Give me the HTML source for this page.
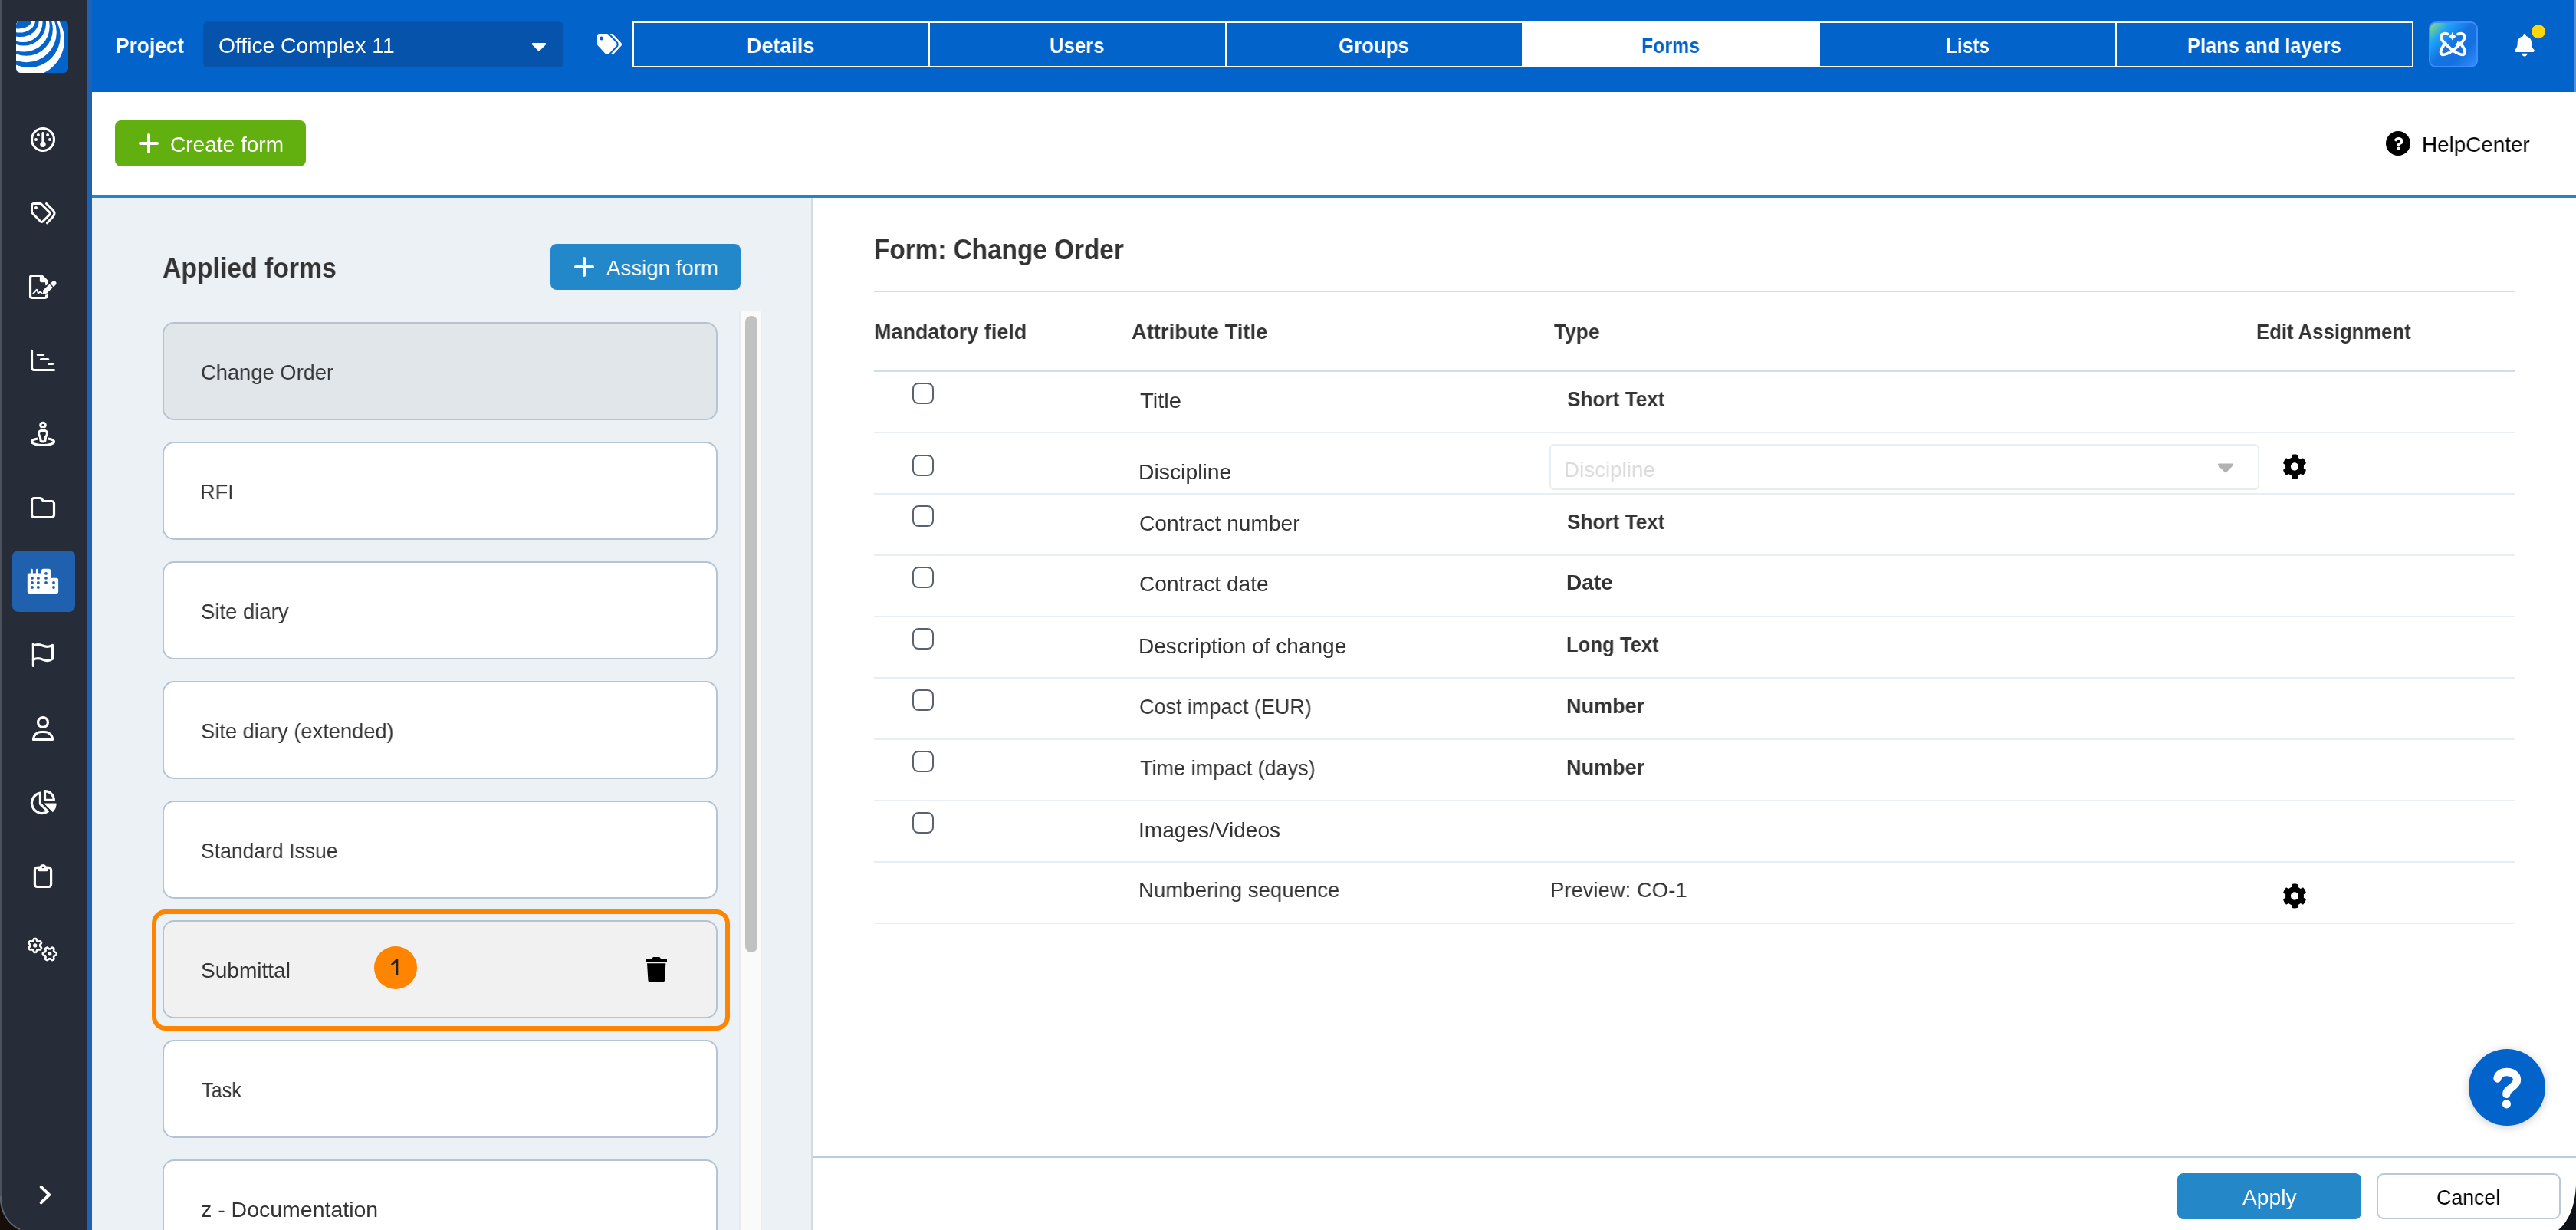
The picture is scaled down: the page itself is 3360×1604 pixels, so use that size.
<!DOCTYPE html>
<html><head><meta charset="utf-8"><title>Forms</title>
<style>
html,body{margin:0;padding:0}
body{width:3360px;height:1604px;position:relative;overflow:hidden;background:#fff;font-family:"Liberation Sans",sans-serif}
div,span,svg{position:absolute;box-sizing:border-box}
.t{white-space:nowrap;line-height:1;transform-origin:0 0;will-change:transform}
.side{left:0;top:0;width:114px;height:1604px;background:#262c38}
.sidestrip{left:114px;top:0;width:6px;height:1604px;background:#1f62b3}
.header{left:120px;top:0;width:3240px;height:120px;background:#0263cb}
.blueline{left:120px;top:254px;width:3240px;height:4px;background:#2285c6}
.leftpanel{left:120px;top:258px;width:940px;height:1346px;background:#ecf1f6;border-right:2px solid #cfdce6}
.card{left:212px;width:724px;height:128px;border:2px solid #b6c3d2;border-radius:15px;background:#fff}
.hr{background:#e8eef3;height:2px;left:1140px;width:2140px}
.cb{left:1190px;width:28px;height:28px;border:2px solid #58636f;border-radius:8px;background:#fff}
.tab{top:28px;height:60px;border:2px solid #fff}

</style></head>
<body>
<!-- base layout -->
<div class="header"></div>
<div class="side"></div>
<div class="sidestrip"></div>
<div class="blueline"></div>
<div class="leftpanel"></div>

<!-- header: project select -->
<div style="left:265px;top:28px;width:470px;height:60px;background:#0553aa;border-radius:6px"></div>
<svg style="left:693px;top:44px" width="20" height="32" viewBox="0 0 320 512"><path fill="#fff" d="M31.3 192h257.3c17.8 0 26.7 21.5 14.1 34.1L174.1 354.8c-7.8 7.8-20.5 7.8-28.3 0L17.2 226.1C4.6 213.5 13.5 192 31.3 192z"/></svg>
<!-- header tags icon -->
<svg style="left:779px;top:44px" width="32" height="27.4" viewBox="0 0 640 512" preserveAspectRatio="none"><path fill="#fff" d="M497.941 225.941L286.059 14.059A48 48 0 0 0 252.118 0H48C21.49 0 0 21.49 0 48v204.118a48 48 0 0 0 14.059 33.941l211.882 211.882c18.744 18.745 49.136 18.746 67.882 0l204.118-204.118c18.745-18.745 18.745-49.137 0-67.882zM112 160c-26.51 0-48-21.49-48-48s21.49-48 48-48 48 21.49 48 48-21.49 48-48 48zm513.941 133.823L421.823 497.941c-18.745 18.745-49.137 18.745-67.882 0l-.36-.36L527.64 323.522c16.999-16.999 26.36-39.6 26.36-63.64s-9.362-46.641-26.36-63.64L331.397 0h48.721a48 48 0 0 1 33.941 14.059l211.882 211.882c18.745 18.745 18.745 49.137 0 67.882z"/></svg>
<!-- tabs -->
<div class="tab" style="left:825px;width:2323px"></div>
<div style="left:1211px;top:28px;width:2px;height:60px;background:#fff"></div>
<div style="left:1598px;top:28px;width:2px;height:60px;background:#fff"></div>
<div style="left:1985px;top:28px;width:389px;height:60px;background:#fff"></div>
<div style="left:2759px;top:28px;width:2px;height:60px;background:#fff"></div>
<!-- AI button -->
<div style="left:3168px;top:28px;width:64px;height:60px;border-radius:9px;border:2px solid #3f8cff;background:linear-gradient(135deg,#8fe06c 0%,#1da2fb 24%,#1473e1 48%,#1470e0 70%,#2c90fb 100%)"></div>
<svg style="left:3180px;top:40px" width="40" height="36" viewBox="0 0 40 36" fill="none" stroke="#fff" stroke-width="3.8" stroke-linecap="round" stroke-linejoin="round">
 <path d="M12.70 4.40C11.88 4.30 9.18 3.55 7.80 3.80C6.42 4.05 5.02 4.93 4.40 5.90C3.78 6.87 3.63 8.15 4.10 9.60C4.57 11.05 5.87 12.95 7.20 14.60C8.53 16.25 10.05 17.60 12.10 19.50C14.15 21.40 17.03 24.25 19.50 26.00C21.97 27.75 24.73 29.12 26.90 30.00C29.07 30.88 31.15 31.50 32.50 31.30C33.85 31.10 34.68 29.93 35.00 28.80C35.32 27.67 34.92 25.95 34.40 24.50C33.88 23.05 32.83 21.45 31.90 20.10C30.97 18.75 29.32 17.02 28.80 16.40"/>
 <path d="M26.00 4.40C26.82 4.30 29.52 3.55 30.90 3.80C32.28 4.05 33.68 4.93 34.30 5.90C34.92 6.87 35.07 8.15 34.60 9.60C34.13 11.05 32.83 12.95 31.50 14.60C30.17 16.25 28.65 17.60 26.60 19.50C24.55 21.40 21.67 24.25 19.20 26.00C16.73 27.75 13.97 29.12 11.80 30.00C9.63 30.88 7.55 31.50 6.20 31.30C4.85 31.10 4.02 29.93 3.70 28.80C3.38 27.67 3.78 25.95 4.30 24.50C4.82 23.05 5.87 21.45 6.80 20.10C7.73 18.75 9.38 17.02 9.90 16.40"/>
 <path d="M18.90 2.90L20.38 6.02L23.50 7.50L20.38 8.98L18.90 12.10L17.42 8.98L14.30 7.50L17.42 6.02Z" fill="#fff" stroke-width="1"/>
 <path d="M26.00 14.20L27.13 16.57L29.50 17.70L27.13 18.83L26.00 21.20L24.87 18.83L22.50 17.70L24.87 16.57Z" fill="#fff" stroke-width="1"/>
</svg>
<!-- bell -->
<svg style="left:3280px;top:44.2px" width="25.8" height="29.4" viewBox="0 0 448 512" preserveAspectRatio="none"><path fill="#fff" d="M224 512c35.32 0 63.97-28.65 63.97-64H160.030c0 35.350 28.650 64 63.970 64zm215.390-149.710c-19.320-20.760-55.470-51.990-55.470-154.290 0-77.700-54.480-139.900-127.940-155.160V32c0-17.670-14.320-32-31.980-32s-31.980 14.330-31.980 32v20.840C118.560 68.100 64.080 130.300 64.080 208c0 102.300-36.150 133.530-55.470 154.290-6 6.450-8.660 14.160-8.610 21.710.110 16.400 12.980 32 32.100 32h383.800c19.120 0 32-15.600 32.100-32 .05-7.550-2.610-15.270-8.610-21.710z"/></svg>
<div style="left:3302px;top:32px;width:18px;height:18px;border-radius:9px;background:#ffd60a"></div>
<div style="left:3358px;top:0;width:2px;height:120px;background:rgba(255,255,255,.3)"></div>

<!-- toolbar -->
<div style="left:150px;top:157px;width:249px;height:60px;background:#62b00f;border-radius:8px"></div>
<div style="left:181px;top:185px;width:26px;height:4px;border-radius:2px;background:#fff"></div>
<div style="left:192px;top:174px;width:4px;height:26px;border-radius:2px;background:#fff"></div>
<div style="left:3112px;top:171px;width:32px;height:32px;border-radius:16px;background:#000"></div>
<svg style="left:3121.600px;top:178.500px" width="13" height="17.300" viewBox="0 0 384 512" preserveAspectRatio="none"><path fill="#fff" d="M202.021 0C122.202 0 70.503 32.703 29.914 91.026c-7.363 10.580-5.093 25.086 5.178 32.874l43.138 32.709c10.373 7.865 25.132 6.026 33.253-4.148 25.049-31.381 43.630-49.449 82.757-49.449 30.764 0 68.816 19.799 68.816 49.631 0 22.552-18.617 34.134-48.993 51.164-35.423 19.860-82.299 44.576-82.299 106.405V320c0 13.255 10.745 24 24 24h72.471c13.255 0 24-10.745 24-24v-5.773c0-42.860 125.268-44.645 125.268-160.627C377.504 66.256 286.902 0 202.021 0zM192 373.459c-38.196 0-69.271 31.075-69.271 69.271 0 38.195 31.075 69.270 69.271 69.270s69.271-31.075 69.271-69.271-31.075-69.270-69.271-69.270z"/></svg>

<!-- left panel -->
<div style="left:718px;top:318px;width:248px;height:60px;background:#2388c9;border-radius:8px"></div>
<div style="left:749px;top:346px;width:26px;height:4px;border-radius:2px;background:#fff"></div>
<div style="left:760px;top:335px;width:4px;height:26px;border-radius:2px;background:#fff"></div>

<div class="card" style="top:420px;background:#e1e6eb"></div>
<div class="card" style="top:576px"></div>
<div class="card" style="top:732px"></div>
<div class="card" style="top:888px"></div>
<div class="card" style="top:1044px"></div>
<div style="left:198px;top:1186px;width:754px;height:158px;border:6px solid #ff8500;border-radius:18px"></div>
<div class="card" style="top:1200px;background:#f1f1f1"></div>
<div class="card" style="top:1356px"></div>
<div class="card" style="top:1512px"></div>
<div style="left:488px;top:1234px;width:56px;height:56px;border-radius:28px;background:#ff8500"></div>
<svg style="left:506px;top:1248px" width="18" height="27" viewBox="0 0 18 27"><path d="M10.300 3.100H13.300V23.600H10.300V7.200L5.400 11.300L3.900 9.200Z" fill="#222"/></svg>
<svg style="left:841.8px;top:1247.5px" width="28.4" height="32.8" viewBox="0 0 448 512" preserveAspectRatio="none"><path fill="#000" d="M432 32H312l-9.400-18.700A24 24 0 0 0 281.100 0H166.800a23.720 23.720 0 0 0-21.400 13.300L136 32H16A16 16 0 0 0 0 48v32a16 16 0 0 0 16 16h416a16 16 0 0 0 16-16V48a16 16 0 0 0-16-16zM53.200 467a48 48 0 0 0 47.900 45h245.800a48 48 0 0 0 47.900-45L416 128H32z"/></svg>
<!-- scrollbar -->
<div style="left:964px;top:406px;width:30px;height:1198px;background:#fafafa;border-left:2px solid #eaeaea;border-right:2px solid #eeeeee"></div>
<div style="left:972px;top:412px;width:16px;height:830px;border-radius:8px;background:#c1c1c1"></div>

<!-- right panel -->
<div style="left:1140px;top:379px;width:2140px;height:2px;background:#d3dde7"></div>
<div style="left:1140px;top:483px;width:2140px;height:2px;background:#d1dde8"></div>
<div class="hr" style="top:563px"></div>
<div class="hr" style="top:643px"></div>
<div class="hr" style="top:723px"></div>
<div class="hr" style="top:803px"></div>
<div class="hr" style="top:883px"></div>
<div class="hr" style="top:963px"></div>
<div class="hr" style="top:1043px"></div>
<div class="hr" style="top:1123px"></div>
<div class="hr" style="top:1203px"></div>
<div class="cb" style="top:499px"></div>
<div class="cb" style="top:593px"></div>
<div class="cb" style="top:659px"></div>
<div class="cb" style="top:739px"></div>
<div class="cb" style="top:819px"></div>
<div class="cb" style="top:899px"></div>
<div class="cb" style="top:979px"></div>
<div class="cb" style="top:1059px"></div>
<!-- discipline select -->
<div style="left:2021px;top:579px;width:926px;height:60px;border:2px solid #e8edf3;border-radius:6px;background:#fff"></div>
<svg style="left:2892px;top:590.5px" width="22" height="36" viewBox="0 0 320 512" preserveAspectRatio="none"><path fill="#b2b2b2" d="M31.3 192h257.3c17.8 0 26.7 21.5 14.1 34.1L174.1 354.8c-7.8 7.8-20.5 7.8-28.3 0L17.2 226.1C4.6 213.5 13.5 192 31.3 192z"/></svg>
<!-- gears -->
<svg style="left:2977px;top:592.3px" width="32" height="33" viewBox="0 0 512 512" preserveAspectRatio="none"><path id="cog" fill="#000" d="M487.4 315.7l-42.6-24.6c4.3-23.2 4.3-47 0-70.2l42.6-24.6c4.9-2.8 7.1-8.6 5.5-14-11.100-35.600-30-67.800-54.700-94.600-3.800-4.100-10-5.100-14.800-2.300L380.800 110c-17.900-15.400-38.500-27.300-60.800-35.100V25.800c0-5.600-3.900-10.500-9.400-11.700-36.700-8.200-74.300-7.800-109.200 0-5.500 1.200-9.400 6.100-9.400 11.700V75c-22.200 7.900-42.800 19.800-60.800 35.100L88.700 85.500c-4.900-2.800-11-1.900-14.800 2.300-24.700 26.700-43.600 58.900-54.700 94.600-1.700 5.400.6 11.200 5.500 14L67.300 221c-4.300 23.200-4.300 47 0 70.200l-42.600 24.600c-4.900 2.800-7.100 8.600-5.500 14 11.100 35.600 30 67.800 54.700 94.600 3.800 4.100 10 5.100 14.800 2.300l42.600-24.600c17.900 15.400 38.500 27.300 60.800 35.100v49.200c0 5.600 3.900 10.500 9.400 11.700 36.700 8.200 74.300 7.800 109.200 0 5.500-1.200 9.400-6.100 9.400-11.700v-49.200c22.200-7.900 42.800-19.800 60.800-35.100l42.600 24.600c4.900 2.800 11 1.900 14.800-2.300 24.700-26.700 43.600-58.900 54.700-94.600 1.500-5.500-.7-11.300-5.600-14.100zM256 336c-44.100 0-80-35.900-80-80s35.900-80 80-80 80 35.900 80 80-35.900 80-80 80z"/></svg>
<svg style="left:2977px;top:1152.3px" width="32" height="33" viewBox="0 0 512 512" preserveAspectRatio="none"><use href="#cog"/></svg>

<!-- footer -->
<div style="left:1060px;top:1508px;width:2300px;height:2px;background:#bccada"></div>
<div style="left:2840px;top:1530px;width:240px;height:60px;background:#2387c8;border-radius:8px"></div>
<div style="left:3100px;top:1530px;width:240px;height:60px;background:#fff;border:2px solid #bac8d7;border-radius:9px"></div>
<!-- FAB -->
<div style="left:3220px;top:1368px;width:100px;height:100px;border-radius:50px;background:#0263cb;box-shadow:0 2px 12px rgba(0,0,0,.2)"></div>
<svg style="left:3245px;top:1385px" width="50" height="66" viewBox="0 0 50 66" fill="none" stroke="#fff" stroke-width="10.300" stroke-linecap="round" stroke-linejoin="round"><path d="M12.500 21.500C13 16 18 13 25 13C32.500 13 38 17 38 23C38 28 34 31 30 34C26.500 36.800 24.300 38.500 24.300 41.800"/><circle cx="24.400" cy="54.800" r="5.600" fill="#fff" stroke="none"/></svg>

<!-- left edge strip -->
<div style="left:0;top:0;width:2px;height:1604px;background:#4c515b"></div>
<!-- logo -->
<svg style="left:21px;top:27px" width="68" height="68" viewBox="0 0 68 68">
 <defs><clipPath id="lc"><rect x="0" y="0" width="68" height="68" rx="6"/></clipPath></defs>
 <g clip-path="url(#lc)">
  <rect width="68" height="68" fill="#0263cb"/>
  <circle cx="15" cy="25" r="48" fill="#fff"/>
  <circle cx="16.700" cy="20" r="41.100" fill="#0263cb"/>
  <circle cx="13.600" cy="15" r="39.200" fill="#fff"/>
  <circle cx="13.200" cy="11.200" r="34.660" fill="#0263cb"/>
  <circle cx="10.500" cy="7.460" r="33.150" fill="#fff"/>
  <circle cx="9.800" cy="3.400" r="29.200" fill="#0263cb"/>
  <circle cx="9" cy="2.600" r="25.500" fill="#fff"/>
  <ellipse cx="5.700" cy="0" rx="24.100" ry="21.100" fill="#0263cb"/>
  <ellipse cx="4.080" cy="0" rx="20.900" ry="15.600" fill="#fff"/>
  <ellipse cx="3.300" cy="0" rx="16.900" ry="10.400" fill="#0263cb"/>
 </g>
</svg>
<!-- active item -->
<div style="left:16px;top:718px;width:82px;height:80px;border-radius:8px;background:#1f61af"></div>
<!-- 1 gauge -->
<svg style="left:40px;top:166px" width="32" height="32" viewBox="0 0 32 32" fill="none" stroke="#fff" stroke-width="3.100" stroke-linecap="round">
 <circle cx="16" cy="16" r="14.500"/>
 <path d="M16 7.700V21" stroke-width="3.300"/>
 <circle cx="16" cy="22.200" r="3.700" fill="#fff" stroke="none"/>
 <g fill="#fff" stroke="none"><circle cx="7" cy="16" r="2"/><circle cx="9.900" cy="9.900" r="2"/><circle cx="22.100" cy="9.900" r="2"/><circle cx="25" cy="16" r="2"/></g>
</svg>
<!-- 2 tags -->
<svg style="left:40px;top:264px" width="34" height="29" viewBox="0 0 34 29" fill="none" stroke="#fff" stroke-width="3" stroke-linecap="round" stroke-linejoin="round">
 <path d="M4 1.500H13.200L24.600 12.900a2.200 2.200 0 0 1 0 3.100L15.900 24.700a2.200 2.200 0 0 1-3.100 0L1.500 13.300V4A2.500 2.500 0 0 1 4 1.500Z"/>
 <circle cx="7" cy="7" r="2" fill="#fff" stroke="none"/>
 <path d="M20.500 1.500L28.800 9.800Q33.200 14.300 28.800 19L21.500 26.800"/>
</svg>
<!-- 3 file signature -->
<svg style="left:37px;top:358px" width="39" height="33" viewBox="0 0 39 33" fill="none" stroke="#fff" stroke-width="3.200" stroke-linecap="round" stroke-linejoin="round">
 <path d="M23.700 8.200V13M23.700 26.800V28a2.500 2.500 0 0 1-2.500 2.500H5.050a2.500 2.500 0 0 1-2.500-2.500V4a2.500 2.500 0 0 1 2.500-2.500H17L23.700 8.200"/>
 <path d="M14.850 1.500H17L23.700 8.200V10.200H17.350a2.500 2.500 0 0 1-2.500-2.500Z" fill="#fff" stroke="none"/>
 <path d="M6.300 25L10.950 19.700L12.900 24.500L15.300 22.600L18.300 24.500H23.500" stroke-width="1.900"/>
 <path d="M22.300 21.700L33.300 11.400" stroke="#262c38" stroke-width="9.400"/>
 <path d="M19.200 25L20.500 19.500L24.800 23.600Z" fill="#fff" stroke-width="1"/>
 <path d="M22.600 21.500L33.300 11.400" stroke-width="6.200"/>
 <path d="M27.300 11.300L33.400 17.700" stroke="#262c38" stroke-width="1.400" stroke-linecap="butt"/>
</svg>
<!-- 4 gantt -->
<svg style="left:40px;top:455px" width="33" height="30" viewBox="0 0 33 30" fill="none" stroke="#fff" stroke-width="3.200" stroke-linecap="round" stroke-linejoin="round">
 <path d="M1.500 2.400V24.500a3 3 0 0 0 3 3H30.500"/>
 <path d="M9.200 7.500H16.700M13.400 13.500H22.800M23.400 19.500H28.600" stroke-width="3"/>
</svg>
<!-- 5 street view -->
<svg style="left:40px;top:549px" width="33" height="34" viewBox="0 0 33 34" fill="none" stroke="#fff" stroke-width="3.200" stroke-linecap="round" stroke-linejoin="round">
 <circle cx="16" cy="5.440" r="3.200"/>
 <ellipse cx="16" cy="27" rx="14.500" ry="4.500"/>
 <defs><path id="svb" d="M16 12.300C19.500 12.300 21.500 14 21.500 16.500C21.500 18.500 20.300 19.800 19.600 20.600L19 25A3 1.800 0 0 1 13 25L12.400 20.600C11.700 19.800 10.500 18.500 10.500 16.500C10.500 14 12.500 12.300 16 12.300Z"/></defs>
 <use href="#svb" stroke="#262c38" stroke-width="6.400" fill="#262c38"/>
 <use href="#svb" stroke="#fff" stroke-width="3.200" fill="none"/>
</svg>
<!-- 6 folder -->
<svg style="left:40px;top:647px" width="33" height="30" viewBox="0 0 33 30" fill="none" stroke="#fff" stroke-width="3.200" stroke-linecap="round" stroke-linejoin="round">
 <path d="M4.500 2.500H13L17 6.500H27.500a3 3 0 0 1 3 3V24.500a3 3 0 0 1-3 3H4.500a3 3 0 0 1-3-3V5.500a3 3 0 0 1 3-3Z"/>
</svg>
<!-- 7 city (solid) -->
<svg style="left:35px;top:741px" width="42" height="34" viewBox="0 0 42 34">
 <path fill="#fff" d="M3.300 6.600H4.900V2.200a1.450 1.450 0 0 1 2.900 0V6.600H11.900V2.200a1.450 1.450 0 0 1 2.900 0V6.600H19V3.200a2.500 2.500 0 0 1 2.500-2.500H28.600a2.500 2.500 0 0 1 2.500 2.500V12.800H38.600a2.500 2.500 0 0 1 2.500 2.500V30.500a2.500 2.500 0 0 1-2.500 2.500H3.300a2.500 2.500 0 0 1-2.500-2.500V9.100a2.500 2.500 0 0 1 2.500-2.500Z"/>
 <g fill="#1f61af"><circle cx="7" cy="12.900" r="1.950"/><circle cx="14.900" cy="12.900" r="1.950"/><circle cx="7" cy="18.900" r="1.950"/><circle cx="14.900" cy="18.900" r="1.950"/><circle cx="7" cy="25" r="1.950"/><circle cx="14.900" cy="25" r="1.950"/><circle cx="25" cy="6.900" r="1.950"/><circle cx="25" cy="12.900" r="1.950"/><circle cx="25" cy="18.900" r="1.950"/><circle cx="35" cy="18.900" r="1.950"/><circle cx="35" cy="25" r="1.950"/></g>
</svg>
<!-- 8 flag -->
<svg style="left:41px;top:837px" width="31" height="34" viewBox="0 0 31 34" fill="none" stroke="#fff" stroke-width="3.200" stroke-linecap="round" stroke-linejoin="round">
 <path d="M2.400 2.500V31.500"/>
 <path d="M2.400 5.200C6 3.200 10 3.200 14 4.800S23 7.200 27.500 4.400V22.200C23 25.400 19 25 15 23.200S6.500 21 2.400 23.400"/>
</svg>
<!-- 9 user -->
<svg style="left:42px;top:933px" width="29" height="34" viewBox="0 0 29 34" fill="none" stroke="#fff" stroke-width="3.200" stroke-linecap="round" stroke-linejoin="round">
 <circle cx="14" cy="8.950" r="6.450"/>
 <path d="M1.500 31.500C1.500 26 6 21.500 12 21.500H16C22 21.500 26.500 26 26.500 31.500Z"/>
</svg>
<!-- 10 pie -->
<svg style="left:39px;top:1029px" width="37" height="34" viewBox="0 0 37 34" fill="none" stroke="#fff" stroke-width="3.200" stroke-linejoin="round">
 <path d="M13.440 5.150V19.440L23.200 29.200A13.270 13.270 0 1 1 13.440 5.150Z"/>
 <path d="M19.540 2.600V14.410H31.340A11.800 11.800 0 0 0 19.540 2.600Z"/>
 <path d="M18.950 18.950H34.350A15.400 15.400 0 0 1 29.850 29.850Z" fill="#fff" stroke-width=".8"/>
</svg>
<!-- 11 clipboard -->
<svg style="left:43px;top:1124px" width="26" height="35" viewBox="0 0 26 35" fill="none" stroke="#fff" stroke-width="3.200" stroke-linejoin="round">
 <rect x="2.400" y="7.400" width="21.200" height="25.100" rx="3"/>
 <path d="M5.900 5.800H8.500A5 5 0 0 1 17.500 5.800H20.100V10a2.200 2.200 0 0 1-2.200 2.200H8.100a2.200 2.200 0 0 1-2.200-2.200Z" fill="#fff" stroke="none"/>
 <circle cx="13" cy="6.930" r="1.250" fill="#262c38" stroke="none"/>
</svg>
<svg style="left:35px;top:1222px" width="42" height="33" viewBox="0 0 42 33" fill="none" stroke="#fff" stroke-width="2.600" stroke-linejoin="round">
 <path d="M17.31 10.90L17.30 11.33L17.25 11.75L17.60 12.26L18.25 12.91L18.84 13.64L19.03 14.33L18.79 14.86L18.51 15.38L18.20 15.87L17.86 16.35L17.17 16.52L16.24 16.38L15.36 16.14L14.75 16.10L14.40 16.35L14.04 16.57L13.66 16.77L13.27 16.95L13.00 17.50L12.77 18.39L12.42 19.27L11.93 19.77L11.35 19.83L10.76 19.85L10.17 19.83L9.59 19.77L9.10 19.27L8.75 18.39L8.52 17.50L8.25 16.95L7.86 16.77L7.49 16.57L7.12 16.35L6.77 16.10L6.16 16.14L5.28 16.38L4.35 16.52L3.66 16.35L3.32 15.87L3.01 15.38L2.73 14.86L2.49 14.33L2.68 13.64L3.27 12.91L3.92 12.26L4.27 11.75L4.22 11.33L4.21 10.90L4.22 10.47L4.27 10.05L3.92 9.54L3.27 8.89L2.68 8.16L2.49 7.47L2.73 6.94L3.01 6.43L3.32 5.93L3.66 5.45L4.35 5.28L5.28 5.42L6.16 5.66L6.77 5.70L7.12 5.45L7.48 5.23L7.86 5.03L8.25 4.85L8.52 4.30L8.75 3.41L9.10 2.53L9.59 2.03L10.17 1.97L10.76 1.95L11.35 1.97L11.93 2.03L12.42 2.53L12.77 3.41L13.00 4.30L13.27 4.85L13.66 5.03L14.04 5.23L14.40 5.45L14.75 5.70L15.36 5.66L16.24 5.42L17.17 5.28L17.86 5.45L18.20 5.93L18.51 6.42L18.79 6.94L19.03 7.47L18.84 8.16L18.25 8.89L17.60 9.54L17.25 10.05L17.30 10.47Z"/><circle cx="10.760" cy="10.900" r="2.600" fill="#fff" stroke="none"/>
 <path d="M38.75 21.85L38.73 22.44L38.67 23.02L38.17 23.51L37.29 23.86L36.40 24.09L35.85 24.36L35.67 24.75L35.47 25.12L35.25 25.49L35.00 25.84L35.04 26.45L35.28 27.33L35.42 28.26L35.25 28.95L34.77 29.29L34.27 29.60L33.76 29.88L33.23 30.12L32.54 29.93L31.81 29.34L31.16 28.69L30.65 28.34L30.23 28.39L29.80 28.40L29.37 28.39L28.95 28.34L28.44 28.69L27.79 29.34L27.06 29.93L26.37 30.12L25.84 29.88L25.33 29.60L24.83 29.29L24.35 28.95L24.18 28.26L24.32 27.33L24.56 26.45L24.60 25.84L24.35 25.49L24.13 25.12L23.93 24.75L23.75 24.36L23.20 24.09L22.31 23.86L21.43 23.51L20.93 23.02L20.87 22.44L20.85 21.85L20.87 21.26L20.93 20.68L21.43 20.19L22.31 19.84L23.20 19.61L23.75 19.34L23.93 18.95L24.13 18.58L24.35 18.21L24.60 17.86L24.56 17.25L24.32 16.37L24.18 15.44L24.35 14.75L24.83 14.41L25.32 14.10L25.84 13.82L26.37 13.58L27.06 13.77L27.79 14.36L28.44 15.01L28.95 15.36L29.37 15.31L29.80 15.30L30.23 15.31L30.65 15.36L31.16 15.01L31.81 14.36L32.54 13.77L33.23 13.58L33.76 13.82L34.27 14.10L34.77 14.41L35.25 14.75L35.42 15.44L35.28 16.37L35.04 17.25L35.00 17.86L35.25 18.21L35.47 18.57L35.67 18.95L35.85 19.34L36.40 19.61L37.29 19.84L38.17 20.19L38.67 20.68L38.73 21.26Z"/><circle cx="29.800" cy="21.850" r="2.600" fill="#fff" stroke="none"/>
</svg>
<!-- 13 chevron -->
<svg style="left:50px;top:1544px" width="20" height="29" viewBox="0 0 20 29" fill="none" stroke="#fff" stroke-width="3.900" stroke-linecap="round" stroke-linejoin="round"><path d="M3.650 3.850L14.250 14.100L3.650 24.350"/></svg>

<span class="t" style="left:150.9px;top:45.6px;font-size:28px;font-weight:bold;color:#fff;transform:scaleX(0.9402)">Project</span>
<span class="t" style="left:284.5px;top:45.6px;font-size:28px;font-weight:normal;color:#fff;transform:scaleX(1.0081)">Office Complex 11</span>
<span class="t" style="left:974.2px;top:45.9px;font-size:28px;font-weight:bold;color:#fff;transform:scaleX(0.9618)">Details</span>
<span class="t" style="left:1368.8px;top:45.9px;font-size:28px;font-weight:bold;color:#fff;transform:scaleX(0.9192)">Users</span>
<span class="t" style="left:1745.9px;top:45.9px;font-size:28px;font-weight:bold;color:#fff;transform:scaleX(0.9216)">Groups</span>
<span class="t" style="left:2141.4px;top:45.9px;font-size:28px;font-weight:bold;color:#0263cb;transform:scaleX(0.8893)">Forms</span>
<span class="t" style="left:2537.7px;top:45.9px;font-size:28px;font-weight:bold;color:#fff;transform:scaleX(0.8733)">Lists</span>
<span class="t" style="left:2852.6px;top:45.9px;font-size:28px;font-weight:bold;color:#fff;transform:scaleX(0.9092)">Plans and layers</span>
<span class="t" style="left:221.7px;top:174.8px;font-size:28px;font-weight:normal;color:#fff;transform:scaleX(1.0014)">Create form</span>
<span class="t" style="left:3159.0px;top:174.6px;font-size:28px;font-weight:normal;color:#000;transform:scaleX(0.9935)">HelpCenter</span>
<span class="t" style="left:212.0px;top:332.0px;font-size:36px;font-weight:bold;color:#333;transform:scaleX(0.9370)">Applied forms</span>
<span class="t" style="left:790.6px;top:336.1px;font-size:28px;font-weight:normal;color:#fff;transform:scaleX(0.9877)">Assign form</span>
<span class="t" style="left:1139.8px;top:308.0px;font-size:36px;font-weight:bold;color:#333;transform:scaleX(0.9254)">Form: Change Order</span>
<span class="t" style="left:261.5px;top:471.8px;font-size:28px;font-weight:normal;color:#333;transform:scaleX(0.9755)">Change Order</span>
<span class="t" style="left:260.6px;top:627.8px;font-size:28px;font-weight:normal;color:#333;transform:scaleX(0.9704)">RFI</span>
<span class="t" style="left:261.5px;top:783.8px;font-size:28px;font-weight:normal;color:#333;transform:scaleX(0.9808)">Site diary</span>
<span class="t" style="left:261.5px;top:939.8px;font-size:28px;font-weight:normal;color:#333;transform:scaleX(0.9741)">Site diary (extended)</span>
<span class="t" style="left:261.6px;top:1095.8px;font-size:28px;font-weight:normal;color:#333;transform:scaleX(0.9477)">Standard Issue</span>
<span class="t" style="left:261.5px;top:1251.8px;font-size:28px;font-weight:normal;color:#333;transform:scaleX(1.0018)">Submittal</span>
<span class="t" style="left:262.5px;top:1407.8px;font-size:28px;font-weight:normal;color:#333;transform:scaleX(0.9032)">Task</span>
<span class="t" style="left:261.5px;top:1563.8px;font-size:28px;font-weight:normal;color:#333;transform:scaleX(1.0176)">z - Documentation</span>
<span class="t" style="left:1140.3px;top:418.7px;font-size:28px;font-weight:bold;color:#333;transform:scaleX(0.9629)">Mandatory field</span>
<span class="t" style="left:1476.3px;top:418.9px;font-size:28px;font-weight:bold;color:#333;transform:scaleX(0.9767)">Attribute Title</span>
<span class="t" style="left:2027.3px;top:418.9px;font-size:28px;font-weight:bold;color:#333;transform:scaleX(0.9410)">Type</span>
<span class="t" style="left:2943.1px;top:418.9px;font-size:28px;font-weight:bold;color:#333;transform:scaleX(0.9172)">Edit Assignment</span>
<span class="t" style="left:1486.7px;top:508.5px;font-size:28px;font-weight:normal;color:#333;transform:scaleX(1.0432)">Title</span>
<span class="t" style="left:1484.7px;top:601.9px;font-size:28px;font-weight:normal;color:#333;transform:scaleX(1.0124)">Discipline</span>
<span class="t" style="left:1485.7px;top:668.9px;font-size:28px;font-weight:normal;color:#333;transform:scaleX(1.0052)">Contract number</span>
<span class="t" style="left:1485.7px;top:748.4px;font-size:28px;font-weight:normal;color:#333;transform:scaleX(1.0029)">Contract date</span>
<span class="t" style="left:1484.7px;top:828.5px;font-size:28px;font-weight:normal;color:#333;transform:scaleX(1.0017)">Description of change</span>
<span class="t" style="left:1485.7px;top:908.4px;font-size:28px;font-weight:normal;color:#333;transform:scaleX(0.9635)">Cost impact (EUR)</span>
<span class="t" style="left:1486.7px;top:988.4px;font-size:28px;font-weight:normal;color:#333;transform:scaleX(0.9645)">Time impact (days)</span>
<span class="t" style="left:1484.7px;top:1068.5px;font-size:28px;font-weight:normal;color:#333;transform:scaleX(1.0022)">Images/Videos</span>
<span class="t" style="left:1484.7px;top:1146.9px;font-size:28px;font-weight:normal;color:#333;transform:scaleX(0.9860)">Numbering sequence</span>
<span class="t" style="left:2044.0px;top:506.9px;font-size:28px;font-weight:bold;color:#333;transform:scaleX(0.9342)">Short Text</span>
<span class="t" style="left:2044.0px;top:666.9px;font-size:28px;font-weight:bold;color:#333;transform:scaleX(0.9342)">Short Text</span>
<span class="t" style="left:2043.0px;top:746.4px;font-size:28px;font-weight:bold;color:#333;transform:scaleX(1.0031)">Date</span>
<span class="t" style="left:2043.1px;top:826.9px;font-size:28px;font-weight:bold;color:#333;transform:scaleX(0.9167)">Long Text</span>
<span class="t" style="left:2043.0px;top:906.9px;font-size:28px;font-weight:bold;color:#333;transform:scaleX(0.9657)">Number</span>
<span class="t" style="left:2043.0px;top:986.9px;font-size:28px;font-weight:bold;color:#333;transform:scaleX(0.9657)">Number</span>
<span class="t" style="left:2021.7px;top:1146.5px;font-size:28px;font-weight:normal;color:#333;transform:scaleX(0.9807)">Preview: CO-1</span>
<span class="t" style="left:2039.6px;top:598.7px;font-size:28px;font-weight:normal;color:#dbdbdb;transform:scaleX(0.9911)">Discipline</span>
<span class="t" style="left:2924.8px;top:1547.7px;font-size:28px;font-weight:normal;color:#fff;transform:scaleX(1.0066)">Apply</span>
<span class="t" style="left:3178.4px;top:1547.7px;font-size:28px;font-weight:normal;color:#000;transform:scaleX(0.9548)">Cancel</span>
<svg style="left:0;top:1560px" width="30" height="44" viewBox="0 0 30 44"><path d="M0 4Q2 32 25 44H0Z" fill="#170e09"/><path d="M1 0V5Q3 32 26 43.500" fill="none" stroke="#5a626e" stroke-width="2"/></svg>
<svg style="left:3330px;top:1540px" width="30" height="64" viewBox="0 0 30 64"><path d="M30 6Q28 46 7 64H30Z" fill="#0c1018"/></svg>


</body></html>
